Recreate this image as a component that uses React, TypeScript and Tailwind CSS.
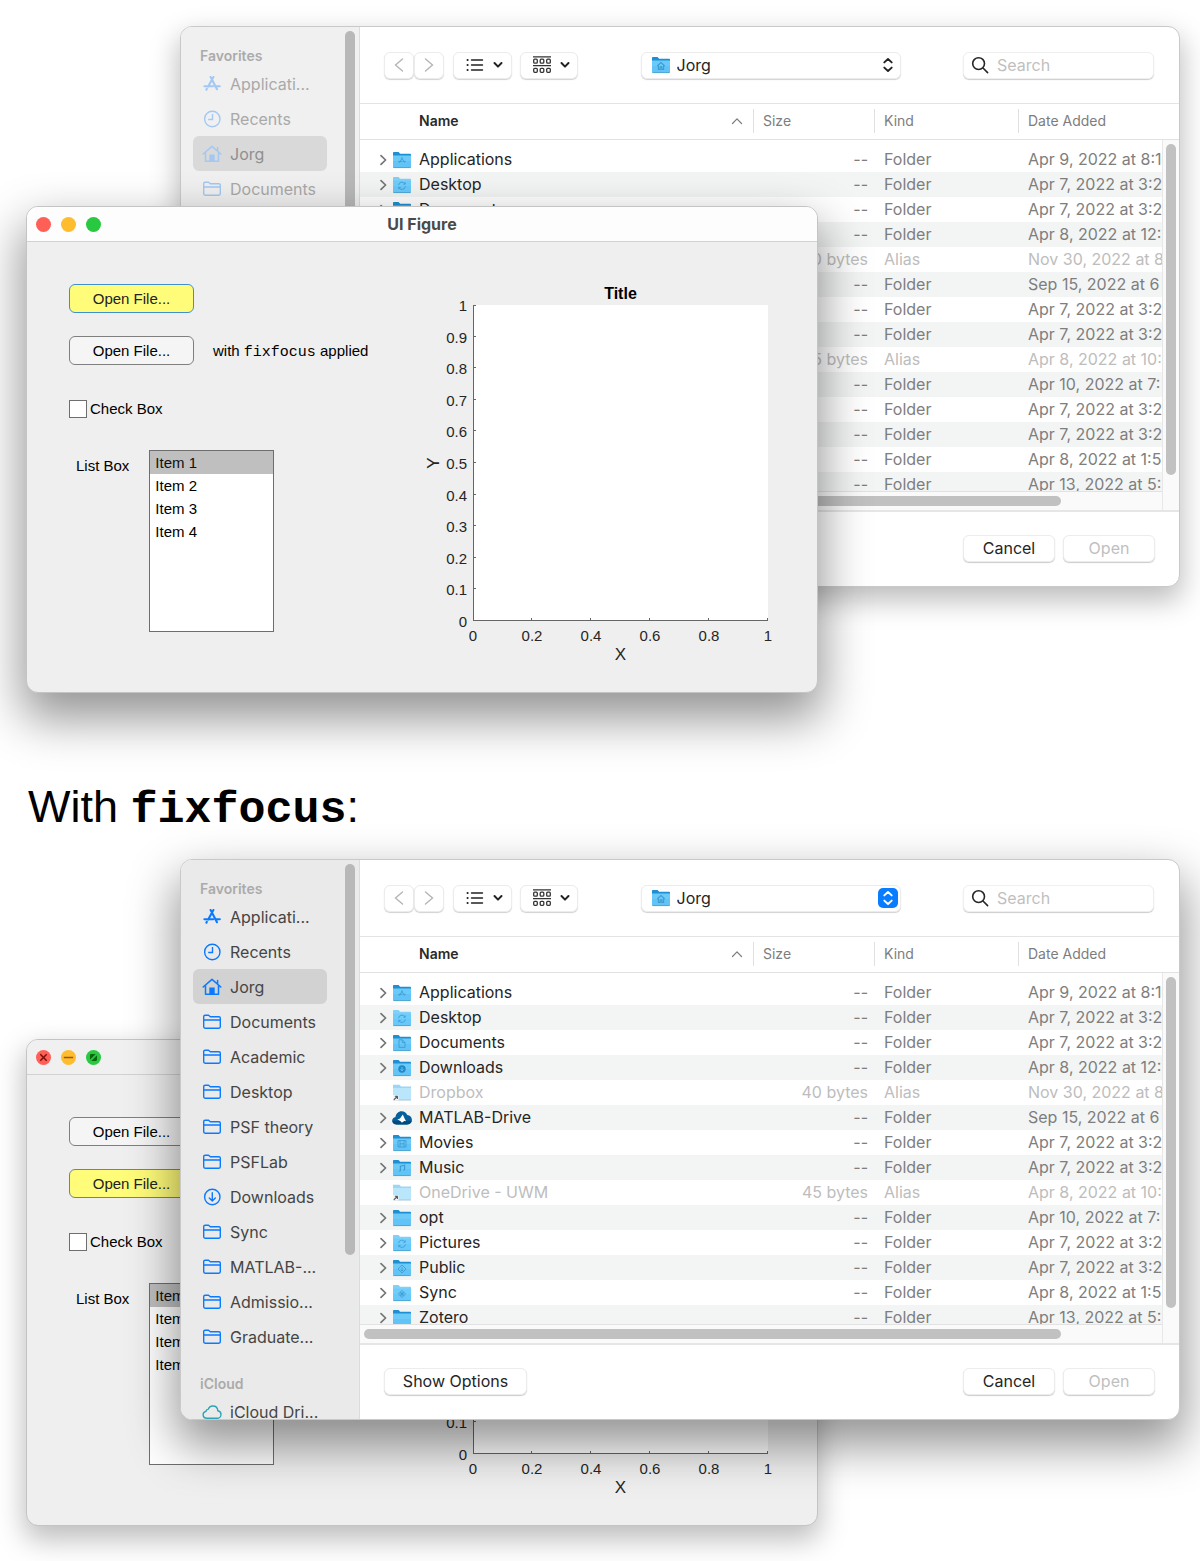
import { useId } from "react";
import type { ReactNode } from "react";

type Glyph = "app" | "sync" | "doc" | "down" | "movie" | "music" | "diamond" | "public" | "home" | "none";

type FileRow = {
  name: string;
  icon: "folder" | "light" | "alias" | "matlab";
  glyph: Glyph;
  size: string;
  kind: string;
  date: string;
};

const files: FileRow[] = [
  { name: "Applications", icon: "folder", glyph: "app", size: "--", kind: "Folder", date: "Apr 9, 2022 at 8:1" },
  { name: "Desktop", icon: "light", glyph: "sync", size: "--", kind: "Folder", date: "Apr 7, 2022 at 3:2" },
  { name: "Documents", icon: "folder", glyph: "doc", size: "--", kind: "Folder", date: "Apr 7, 2022 at 3:2" },
  { name: "Downloads", icon: "folder", glyph: "down", size: "--", kind: "Folder", date: "Apr 8, 2022 at 12:" },
  { name: "Dropbox", icon: "alias", glyph: "none", size: "40 bytes", kind: "Alias", date: "Nov 30, 2022 at 8" },
  { name: "MATLAB-Drive", icon: "matlab", glyph: "none", size: "--", kind: "Folder", date: "Sep 15, 2022 at 6" },
  { name: "Movies", icon: "folder", glyph: "movie", size: "--", kind: "Folder", date: "Apr 7, 2022 at 3:2" },
  { name: "Music", icon: "folder", glyph: "music", size: "--", kind: "Folder", date: "Apr 7, 2022 at 3:2" },
  { name: "OneDrive - UWM", icon: "alias", glyph: "none", size: "45 bytes", kind: "Alias", date: "Apr 8, 2022 at 10:" },
  { name: "opt", icon: "folder", glyph: "none", size: "--", kind: "Folder", date: "Apr 10, 2022 at 7:" },
  { name: "Pictures", icon: "light", glyph: "sync", size: "--", kind: "Folder", date: "Apr 7, 2022 at 3:2" },
  { name: "Public", icon: "folder", glyph: "public", size: "--", kind: "Folder", date: "Apr 7, 2022 at 3:2" },
  { name: "Sync", icon: "light", glyph: "diamond", size: "--", kind: "Folder", date: "Apr 8, 2022 at 1:5" },
  { name: "Zotero", icon: "folder", glyph: "none", size: "--", kind: "Folder", date: "Apr 13, 2022 at 5:" },
];

type SideIcon = "apps" | "clock" | "home" | "folder" | "download" | "cloud";

const favorites: { label: string; icon: SideIcon }[] = [
  { label: "Applicati...", icon: "apps" },
  { label: "Recents", icon: "clock" },
  { label: "Jorg", icon: "home" },
  { label: "Documents", icon: "folder" },
  { label: "Academic", icon: "folder" },
  { label: "Desktop", icon: "folder" },
  { label: "PSF theory", icon: "folder" },
  { label: "PSFLab", icon: "folder" },
  { label: "Downloads", icon: "download" },
  { label: "Sync", icon: "folder" },
  { label: "MATLAB-...", icon: "folder" },
  { label: "Admissio...", icon: "folder" },
  { label: "Graduate...", icon: "folder" },
];

const glyphs: Record<Glyph, ReactNode> = {
  none: null,
  app: <path d="M9.6 6.6 12.4 11.6M10.4 6.6 7.4 11.8M6.2 10.4h4.2M11.6 10.4h2.2" />,
  sync: <path d="M6.6 9.2a3.4 3.4 0 0 1 6.4-1.2M13.4 10.4a3.4 3.4 0 0 1-6.4 1.2M13.2 6.4V8.2h-1.8M6.8 13.2v-1.8h1.8" />,
  doc: <path d="M7 5.8h3.4l2.6 2.6v5H7zM10.2 6v2.6H13" />,
  down: (
    <>
      <circle cx="10" cy="10" r="3.7" fill="#2188c9" stroke="none" />
      <path d="M10 8v3.6M8.5 10.3 10 11.8l1.500-1.500" stroke="#6cc8f8" />
    </>
  ),
  movie: <path d="M6 6.600h8v6.400H6zM8 6.600V13M12 6.600V13M8 9.800h4" />,
  music: <path d="M8.400 12V7.200l4.200-1v4.800M7.200 12.200h1.200M11.400 11.200h1.200" strokeWidth="1.200" />,
  diamond: <path d="M10 6.400 13.600 10 10 13.600 6.400 10zM8.200 8.200l3.600 3.600M11.800 8.200l-3.600 3.600M10 8v4M8 10h4" />,
  public: <path d="M10 6 14 10 10 14 6 10zM10 8v4M8.800 10.800 10 12l1.200-1.200" />,
  home: <path d="M6.200 10 10 6.600l3.800 3.400M7.400 9.400v4h1.800v-2.600h1.600v2.600h1.800v-4" strokeWidth="1.100" />,
};

function FileIcon({ icon, glyph }: { icon: FileRow["icon"]; glyph: Glyph }) {
  if (icon === "matlab") {
    return (
      <svg viewBox="0 0 20 18" className="h-[18px] w-5 shrink-0" aria-hidden="true">
        <path d="M5 15.500C2 15.500.2 13.900.2 11.600c0-2 1.400-3.400 3.300-3.700C3.900 4.800 6.300 2.300 9.600 2.300c2.700 0 4.700 1.400 5.700 3.700 2.700.2 4.600 2.200 4.600 4.800 0 2.700-2 4.700-4.900 4.700z" fill="#06609a" />
        <path d="M4.500 15.500C1.900 15.400.3 13.800.3 11.700h19.500c-.4 2.200-2.300 3.800-4.800 3.800z" fill="#024a7d" />
        <path d="M5.400 10.600 8 9.400l2.800-3.800c.9 1.700 1.800 4.600 3.400 6.800-1.400-.7-2.300-.5-4.300 1.400-.8-1.500-2.100-2.300-4.500-3.200z" fill="#fff" />
      </svg>
    );
  }
  if (icon === "alias") {
    return (
      <svg viewBox="0 0 20 18" className="h-[18px] w-5 shrink-0" aria-hidden="true">
        <path d="M1 .8h6.500l1.500 1.700H19v13H1z" fill="#9dd6f4" />
        <path d="M1 4h18v12H1z" fill="#b9e6fb" />
        <path d="M1 16h18" stroke="#a5c6d6" strokeWidth="1" />
        <path d="M1 11h5.500v5.500H1z" fill="#f6f6f6" />
        <path d="M1.800 15.900 5.200 12.500M2.800 12.300h2.600v2.600" stroke="#555" strokeWidth="1.100" fill="none" />
      </svg>
    );
  }
  const light = icon === "light";
  return (
    <svg viewBox="0 0 20 18" className="h-[18px] w-5 shrink-0" aria-hidden="true">
      <path d="M1 1.800c0-.6.300-.8.800-.8h4.800l1.500 1.700h10.100c.5 0 .8.300.8.800V15H1z" fill={light ? "#83d0f7" : "#1d8fd2"} />
      <path d="M1 4.600h18v11.200c0 .6-.3.900-.9.900H1.900c-.6 0-.9-.3-.9-.9z" fill={light ? "#6fcdfb" : "#6ccaf9"} />
      <path d="M1 10h18v5.800c0 .6-.3.900-.9.900H1.900c-.6 0-.9-.3-.9-.9z" fill={light ? "#69c8fa" : "#62c3f6"} />
      <path d="M1.500 16.600h17" stroke="#489bc6" strokeWidth=".8" />
      <g fill="none" stroke="#3d9dd3" strokeWidth=".9">
        {glyphs[glyph]}
      </g>
    </svg>
  );
}

function SidebarIcon({ icon }: { icon: SideIcon }) {
  const paths: Record<SideIcon, ReactNode> = {
    apps: (
      <g strokeWidth="2.100" strokeLinecap="round">
        <path d="M8.600 3 15 15.200M11.400 3 6.200 12.600M2.400 12.200h8.800M14.400 12.200h3.400M4.800 14.800l-.4.900" />
      </g>
    ),
    clock: (
      <>
        <circle cx="10.300" cy="10" r="7.700" />
        <path d="M10.500 5v5.500H6.200" />
      </>
    ),
    home: (
      <>
        <path d="M1.200 10 10 2.400 18.800 10M3.500 8.500v8.700h13V8.500M15.600 7V3.400" strokeLinecap="round" strokeLinejoin="round" strokeWidth="1.500" />
        <path d="M8 17v-5.800h4V17z" fill="currentColor" />
      </>
    ),
    folder: (
      <path d="M1.700 14.800V4.600c0-.9.500-1.400 1.400-1.400h3.500l1.700 1.500h8.600c.9 0 1.400.500 1.400 1.400v8.700c0 .9-.5 1.400-1.400 1.400H3.100c-.9 0-1.400-.5-1.400-1.400zM1.700 8h16.600" strokeLinejoin="round" />
    ),
    download: (
      <>
        <circle cx="10.300" cy="10" r="7.700" />
        <path d="M10.300 5.800v8M7.300 11l3 3 3-3" strokeLinecap="round" strokeLinejoin="round" />
      </>
    ),
    cloud: (
      <path d="M5 16.300c-2.200 0-3.900-1.500-3.900-3.500 0-1.800 1.200-3.100 2.900-3.400.1-1.200 1-2 2.200-2C6.900 5.200 8.700 4 10.800 4c2.700 0 4.800 2 5 4.700 1.900.3 3.200 1.800 3.200 3.700 0 2.200-1.700 3.900-3.900 3.900z" strokeLinejoin="round" />
    ),
  };
  return (
    <svg viewBox="0 0 20 20" className="size-5 shrink-0" fill="none" stroke="currentColor" strokeWidth="1.400" aria-hidden="true">
      {paths[icon]}
    </svg>
  );
}

function ChevronDown() {
  return (
    <svg viewBox="0 0 10 8" className="h-2 w-2.5" fill="none" stroke="#222" strokeWidth="2" strokeLinecap="round" strokeLinejoin="round" aria-hidden="true">
      <path d="M1.500 2 5 5.600 8.500 2" />
    </svg>
  );
}

function ToolButton({ label, className, children }: { label: string; className: string; children: ReactNode }) {
  return (
    <button
      type="button"
      aria-label={label}
      className={`flex h-[27px] items-center justify-center rounded-md border border-[#ececec] bg-white shadow-[0_1px_1px_rgba(0,0,0,0.18)] ${className}`}
    >
      {children}
    </button>
  );
}

function Sidebar({ active }: { active: boolean }) {
  const itemBase = "flex h-[35px] w-full items-center gap-2 rounded-md pl-[9px] text-left text-base";
  return (
    <nav
      aria-label="Locations"
      className={
        active
          ? "relative h-0 min-h-full overflow-hidden border-r border-[#dcdcdc] bg-[#eaeaea] pt-[18px] pr-8 pl-3 text-[#454545]"
          : "relative h-0 min-h-full overflow-hidden border-r border-[#dcdcdc] bg-[#f0f0f0] pt-[18px] pr-8 pl-3 text-[#a9a9a9]"
      }
    >
      <h2 className="pl-[7px] text-sm leading-[21px] font-semibold text-[#ababab]">Favorites</h2>
      {favorites.map((item) => (
        <button
          key={item.label}
          type="button"
          className={item.label === "Jorg" ? `${itemBase} ${active ? "bg-[#d2d2d2]" : "bg-[#d9d9d9] text-[#8f8f8f]"}` : itemBase}
        >
          <span className={active ? "text-[#0a7aff]" : "text-[#a3c8f3]"}>
            <SidebarIcon icon={item.icon} />
          </span>
          {item.label}
        </button>
      ))}
      <h2 className="mt-[19px] pl-[7px] text-sm leading-[21px] font-semibold text-[#ababab]">iCloud</h2>
      <button type="button" className={itemBase}>
        <span className={active ? "text-[#2aa5b8]" : "text-[#a3d4dc]"}>
          <SidebarIcon icon="cloud" />
        </span>
        iCloud Dri...
      </button>
      <div className="absolute top-1 right-1 h-[391px] w-2.5 rounded-full bg-[#b8b8b8]" />
    </nav>
  );
}

function Toolbar({ active }: { active: boolean }) {
  return (
    <div className="flex h-[77px] items-center justify-between border-b border-[#e4e4e4] pr-[25px] pl-6">
      <div className="flex items-center">
        <ToolButton label="Back" className="w-[30px]">
          <svg viewBox="0 0 10 16" className="h-4 w-2.5" fill="none" stroke="#b5b5b5" strokeWidth="1.400" strokeLinecap="round" aria-hidden="true">
            <path d="M8.500 2 1.500 8l7 6" />
          </svg>
        </ToolButton>
        <ToolButton label="Forward" className="w-[30px]">
          <svg viewBox="0 0 10 16" className="h-4 w-2.5" fill="none" stroke="#b5b5b5" strokeWidth="1.400" strokeLinecap="round" aria-hidden="true">
            <path d="M1.500 2l7 6-7 6" />
          </svg>
        </ToolButton>
        <ToolButton label="List view" className="ml-[9px] w-[59px] gap-[9px] pl-[3px]">
          <svg viewBox="0 0 18 14" className="h-3.5 w-[18px]" fill="none" stroke="#222" strokeWidth="1.400" strokeLinecap="round" aria-hidden="true">
            <path d="M5.500 2h11M5.500 7h11M5.500 12h11" />
            <path d="M1.500 2h.2M1.500 7h.2M1.500 12h.2" strokeWidth="1.900" />
          </svg>
          <ChevronDown />
        </ToolButton>
        <ToolButton label="Group items" className="ml-2 w-[58px] gap-2 pl-[3px]">
          <svg viewBox="0 0 20 18" className="h-[18px] w-5" fill="none" stroke="#333" strokeWidth="1.300" aria-hidden="true">
            <path d="M1 .9h18M1 9.600h18" />
            <rect x="1.700" y="3.200" width="3.600" height="4" rx="1" />
            <rect x="8.200" y="3.200" width="3.600" height="4" rx="1" />
            <rect x="14.700" y="3.200" width="3.600" height="4" rx="1" />
            <rect x="1.700" y="12.300" width="3.600" height="4" rx="1" />
            <rect x="8.200" y="12.300" width="3.600" height="4" rx="1" />
            <rect x="14.700" y="12.300" width="3.600" height="4" rx="1" />
          </svg>
          <ChevronDown />
        </ToolButton>
      </div>
      <div className="relative flex w-[260px] items-center">
        <select
          aria-label="Where"
          className="h-[27px] w-full appearance-none rounded-md border border-[#ececec] bg-white pl-[35px] text-base leading-6 text-[#252525] shadow-[0_1px_1px_rgba(0,0,0,0.18)]"
        >
          <option>Jorg</option>
        </select>
        <span className="pointer-events-none absolute left-2.5">
          <FileIcon icon="folder" glyph="home" />
        </span>
        <span
          className={
            active
              ? "pointer-events-none absolute right-[3px] flex size-5 items-center justify-center rounded-[5px] bg-[#0a7dff] text-white"
              : "pointer-events-none absolute right-[3px] flex size-5 items-center justify-center text-[#222]"
          }
        >
          <svg viewBox="0 0 12 16" className="h-4 w-3" fill="none" stroke="currentColor" strokeWidth="1.900" strokeLinecap="round" strokeLinejoin="round" aria-hidden="true">
            <path d="M2.300 5.400 6 2l3.700 3.400M2.300 10.600 6 14l3.700-3.400" />
          </svg>
        </span>
      </div>
      <div className="relative flex w-[191px] items-center">
        <input
          aria-label="Search"
          type="text"
          placeholder="Search"
          className="h-[27px] w-full rounded-md border border-[#efefef] bg-white pl-[33px] text-base leading-6 shadow-[0_1px_1px_rgba(0,0,0,0.2)] placeholder:text-[#bfbfbf]"
        />
        <svg viewBox="0 0 18 18" className="pointer-events-none absolute left-2 size-[18px]" fill="none" stroke="#262626" strokeWidth="1.600" strokeLinecap="round" aria-hidden="true">
          <circle cx="7.600" cy="7.600" r="5.900" />
          <path d="M12 12l4.600 4.600" />
        </svg>
      </div>
    </div>
  );
}

function HeaderCell({ children }: { children: ReactNode }) {
  return (
    <th scope="col" className="p-0 text-left font-normal text-[#7d7d7d]">
      <div className="flex h-6 items-center border-l border-[#e0e0e0] pl-[9px]">{children}</div>
    </th>
  );
}

function FileList() {
  return (
    <div className="relative border-b-2 border-[#e6e6e6]">
      <div className="h-[388px] overflow-hidden border-b border-[#e2e2e2]">
        <table className="w-full table-fixed border-collapse whitespace-nowrap">
          <colgroup>
            <col />
            <col className="w-[121px]" />
            <col className="w-36" />
            <col className="w-[161px]" />
          </colgroup>
          <thead className="text-sm">
            <tr className="h-[35px] border-b border-[#e2e2e2]">
              <th scope="col" className="p-0 text-left font-semibold text-[#2a2a2a]">
                <div className="flex items-center justify-between pr-2.5 pl-[59px]">
                  Name
                  <svg viewBox="0 0 12 8" className="h-2 w-3" fill="none" stroke="#7d7d7d" strokeWidth="1.200" strokeLinecap="round" strokeLinejoin="round" aria-hidden="true">
                    <path d="M1.500 6.500 6 1.800l4.500 4.700" />
                  </svg>
                </div>
              </th>
              <HeaderCell>Size</HeaderCell>
              <HeaderCell>Kind</HeaderCell>
              <HeaderCell>Date Added</HeaderCell>
            </tr>
          </thead>
          <tbody className="text-base leading-[25px] text-[#7e7e7e]">
            <tr aria-hidden="true" className="h-2" />
            {files.map((file, index) => {
              const alias = file.icon === "alias";
              return (
                <tr key={file.name} className={`h-[25px] ${index % 2 ? "bg-[#f3f5f5]" : "bg-white"} ${alias ? "text-[#bdbdbd]" : ""}`}>
                  <td className="p-0">
                    <div className="flex h-[25px] items-center pl-[18px]">
                      <span className="flex w-3.5 shrink-0">
                        {!alias && (
                          <svg viewBox="0 0 10 12" className="h-3 w-2.5" fill="none" stroke="#757575" strokeWidth="1.700" strokeLinecap="round" strokeLinejoin="round" aria-hidden="true">
                            <path d="M3 1.600 7.600 6 3 10.400" />
                          </svg>
                        )}
                      </span>
                      <FileIcon icon={file.icon} glyph={file.glyph} />
                      <span className={alias ? "pl-[7px]" : "pl-[7px] text-[#252525]"}>{file.name}</span>
                    </div>
                  </td>
                  <td className="p-0 pr-1.5 text-right">{file.size}</td>
                  <td className="p-0 pl-2.5">{file.kind}</td>
                  <td className="p-0 pl-2.5">{file.date}</td>
                </tr>
              );
            })}
          </tbody>
        </table>
      </div>
      <div className="h-[18px] bg-[#fafafa] px-1 pt-1">
        <div className="h-2.5 w-[86%] rounded-full bg-[#c1c1c1]" />
      </div>
      <div className="absolute top-9 right-0 bottom-0 w-[17px] border-l border-[#e8e8e8] bg-[#fafafa] pt-1 pl-[3px]">
        <div className="h-[331px] w-2.5 rounded-full bg-[#c1c1c1]" />
      </div>
    </div>
  );
}

function FileDialog({ active }: { active: boolean }) {
  const button = "h-[27px] rounded-md border border-[#ececec] bg-white text-base leading-6 shadow-[0_1px_1px_rgba(0,0,0,0.2)]";
  return (
    <section
      aria-label="File chooser"
      className={`col-start-1 row-start-1 mr-5 ml-[15%] grid grid-cols-[179px_minmax(0,1fr)] self-start overflow-hidden rounded-xl border border-[#c9c9c9] bg-white font-[Inter,sans-serif] ${
        active ? "z-10 shadow-[0_22px_48px_4px_rgba(0,0,0,0.42)]" : "shadow-[0_12px_28px_2px_rgba(0,0,0,0.26)]"
      }`}
    >
      <Sidebar active={active} />
      <div>
        <Toolbar active={active} />
        <FileList />
        <div className="flex h-[74px] items-center px-6 pb-0.5">
          <button type="button" className={`${button} w-[143px] text-[#252525]`}>Show Options</button>
          <button type="button" className={`${button} ml-auto w-[92px] text-[#252525]`}>Cancel</button>
          <button type="button" disabled className={`${button} ml-2 w-[92px] text-[#bfbfbf]`}>Open</button>
        </div>
      </div>
    </section>
  );
}

function Axes() {
  const left = 56;
  const top = 25;
  const width = 295;
  const height = 316;
  const yTicks = Array.from({ length: 11 }, (_, i) => i / 10);
  const xTicks = Array.from({ length: 6 }, (_, i) => (i * 2) / 10);
  return (
    <svg viewBox="0 0 368 386" className="h-[386px] w-[368px] shrink-0" role="img" aria-label="Empty axes" fontSize="15" fill="#262626">
      <text x={left + width / 2} y="19" textAnchor="middle" fontWeight="bold" fontSize="16" fill="#000">Title</text>
      <rect x={left} y={top} width={width} height={height} fill="#fff" />
      <path d={`M${left + 0.5} ${top}V${top + height - 0.5}H${left + width}`} fill="none" stroke="#666" />
      {yTicks.map((t) => {
        const y = Math.round(top + height * (1 - t));
        return (
          <g key={t}>
            <path d={`M${left} ${y === top ? y + 0.5 : y - 0.5}h3`} stroke="#666" />
            <text x={left - 6} y={y + 6} textAnchor="end">{t}</text>
          </g>
        );
      })}
      {xTicks.map((t) => {
        const x = Math.round(left + width * t);
        return (
          <g key={t}>
            <path d={`M${t === 0 ? x + 0.5 : x - 0.5} ${top + height}v-3`} stroke="#666" />
            <text x={x} y={top + height + 20} textAnchor="middle">{t}</text>
          </g>
        );
      })}
      <text x={left + width / 2} y="380" textAnchor="middle" fontSize="17">X</text>
      <text x="22" y={top + height / 2} textAnchor="middle" fontSize="17" transform={`rotate(-90 22 ${top + height / 2})`}>Y</text>
    </svg>
  );
}

function FigureWindow({ active }: { active: boolean }) {
  const id = useId();
  const button = "h-[29px] w-[125px] rounded-md border text-[15px] leading-5";
  const idle = "border-[#7f7f7f] bg-[#f5f5f5] text-black";
  return (
    <section
      aria-label="UI Figure"
      className={`col-start-1 row-start-1 mt-[180px] ml-[26px] w-[66%] self-start overflow-hidden rounded-xl border border-[#c4c4c4] bg-[#efefef] font-['Liberation_Sans',Arial,sans-serif] text-[15px] text-black ${
        active ? "z-10 shadow-[0_22px_48px_4px_rgba(0,0,0,0.42)]" : "shadow-[0_12px_28px_2px_rgba(0,0,0,0.26)]"
      }`}
    >
      <header
        className={`grid h-[35px] grid-cols-[1fr_auto_1fr] items-center border-b border-[#d2d2d2] ${active ? "bg-[#fdfdfd]" : "bg-[#f0f0f0]"}`}
      >
        <div className="flex gap-2.5 pl-[9px]">
          <button type="button" aria-label="Close" className="size-[15px] rounded-full bg-[#fe5f57]">
            {!active && (
              <svg viewBox="0 0 15 15" stroke="#7a0d08" strokeWidth="1.500" aria-hidden="true">
                <path d="M4.300 4.300l6.400 6.400M10.700 4.300l-6.400 6.400" />
              </svg>
            )}
          </button>
          <button type="button" aria-label="Minimize" className="size-[15px] rounded-full bg-[#febc2e]">
            {!active && (
              <svg viewBox="0 0 15 15" stroke="#985712" strokeWidth="1.500" aria-hidden="true">
                <path d="M2.800 7.500h9.400" />
              </svg>
            )}
          </button>
          <button type="button" aria-label="Zoom" className="size-[15px] rounded-full bg-[#28c840]">
            {!active && (
              <svg viewBox="0 0 15 15" fill="#0b650d" aria-hidden="true">
                <path d="M4 9.700V5.200C4 4.500 4.500 4 5.200 4h4.500zM11 5.300v4.500c0 .7-.5 1.200-1.200 1.200H5.300z" />
              </svg>
            )}
          </button>
        </div>
        <h2 className="font-[Inter,sans-serif] text-base leading-6 font-bold text-[#4a4a4a]">UI Figure</h2>
      </header>
      <div className="flex items-start justify-between pt-[38px] pr-8 pb-[26px] pl-[42px]">
        <div className="pt-1">
          <button type="button" className={`block ${button} ${active ? "border-[#3f8fd0] bg-[#fffc7a] text-[#222]" : idle}`}>
            Open File...
          </button>
          <div className="mt-[23px] flex items-center gap-[19px]">
            <button type="button" className={`${button} ${active ? idle : "border-[#7f7f7f] bg-[#fffc7a] text-[#222]"}`}>
              Open File...
            </button>
            <p className="pt-1">
              with <code className="font-['Liberation_Mono',monospace] text-[15px]">fixfocus</code> applied
            </p>
          </div>
          <div className="mt-[34px] flex items-center gap-[3px]">
            <input
              id={`${id}-check`}
              type="checkbox"
              className="size-[18px] appearance-none border border-[#6e6e6e] bg-white"
            />
            <label htmlFor={`${id}-check`} className="leading-5">Check Box</label>
          </div>
          <div className="mt-[31px] flex items-start gap-5 pl-[7px]">
            <label htmlFor={`${id}-list`} className="pt-1.5 leading-5">List Box</label>
            <select
              id={`${id}-list`}
              size={4}
              defaultValue="Item 1"
              className="h-[182px] w-[125px] appearance-none overflow-hidden border border-[#6e6e6e] bg-white text-[15px]"
            >
              {["Item 1", "Item 2", "Item 3", "Item 4"].map((item) => (
                <option
                  key={item}
                  value={item}
                  className="h-[23px] p-0 pt-[3px] pl-[5px] checked:bg-[linear-gradient(#bfbfbf,#bfbfbf)]"
                >
                  {item}
                </option>
              ))}
            </select>
          </div>
        </div>
        <Axes />
      </div>
    </section>
  );
}

export default function App() {
  return (
    <main className="min-h-screen overflow-hidden bg-white pb-9">
      <div className="grid pt-[26px]">
        <FileDialog active={false} />
        <FigureWindow active />
      </div>
      <h1 className="mt-[90px] pl-7 font-['Liberation_Sans',Arial,sans-serif] text-[45px] leading-[48px] text-black">
        With <code className="font-['Liberation_Mono',monospace] text-[45px] leading-none font-bold">fixfocus</code>:
      </h1>
      <div className="grid pt-[26px]">
        <FigureWindow active={false} />
        <FileDialog active />
      </div>
    </main>
  );
}
